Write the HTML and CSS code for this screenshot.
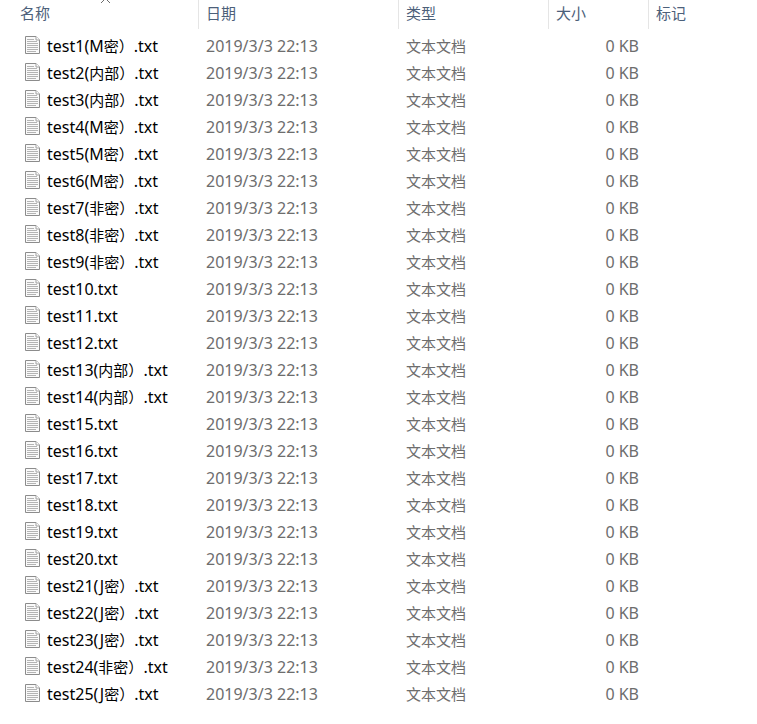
FILE: index.html
```html
<!DOCTYPE html>
<html lang="zh-CN">
<head>
  <meta charset="UTF-8">
  <meta name="viewport" content="width=device-width, initial-scale=1.0">
  <title>文件列表</title>
  <link rel="stylesheet" href="styles.css">
</head>
<body>
  <svg class="symbols" aria-hidden="true">
    <symbol id="fileIcon" viewBox="0 0 15 18">
      <path d="M.5 .5H11L14.5 4V17.5H.5Z" fill="#fafafa" stroke="#8c8c8c"/>
      <path d="M11 .5V4H14.5" fill="#fff" stroke="#a0a0a0"/>
      <path d="M2 3.5H9M2 5.5H12M2 7.5H13M2 9.5H13M2 11.5H13M2 13.5H13M2 15.5H11" stroke="#b4b4b4"/>
    </symbol>
  </svg>

  <table class="file-table">
    <colgroup>
      <col class="col-name">
      <col class="col-date">
      <col class="col-type">
      <col class="col-size">
      <col>
    </colgroup>
    <thead>
      <tr>
        <th class="name" aria-sort="ascending">
          <svg class="sort-arrow" viewBox="0 0 13 4" aria-hidden="true"><path d="M2 3L6.5 -1.5L11 3" fill="none" stroke="#6d6d6d"/></svg>
          <button>名称</button>
        </th>
        <th><button>日期</button></th>
        <th><button>类型</button></th>
        <th><button>大小</button></th>
        <th><button>标记</button></th>
      </tr>
    </thead>
    <tbody id="fileList"></tbody>
  </table>

  <script>
    const files = [
      'test1(M密）.txt',
      'test2(内部）.txt',
      'test3(内部）.txt',
      'test4(M密）.txt',
      'test5(M密）.txt',
      'test6(M密）.txt',
      'test7(非密）.txt',
      'test8(非密）.txt',
      'test9(非密）.txt',
      'test10.txt',
      'test11.txt',
      'test12.txt',
      'test13(内部）.txt',
      'test14(内部）.txt',
      'test15.txt',
      'test16.txt',
      'test17.txt',
      'test18.txt',
      'test19.txt',
      'test20.txt',
      'test21(J密）.txt',
      'test22(J密）.txt',
      'test23(J密）.txt',
      'test24(非密）.txt',
      'test25(J密）.txt'
    ];

    // Chinese characters are set slightly smaller than the Latin text
    function formatName(name) {
      return name.replace(/[^\x00-\x7f]+/g, '<span class="cjk">$&</span>');
    }

    // Render one row per file
    document.getElementById('fileList').innerHTML = files.map(name => `
      <tr>
        <td class="name"><div class="file"><svg class="file-icon"><use href="#fileIcon"/></svg><span>${formatName(name)}</span></div></td>
        <td>2019/3/3 22:13</td>
        <td class="type">文本文档</td>
        <td class="size">0 KB</td>
        <td></td>
      </tr>`).join('');
  </script>
</body>
</html>
```

FILE: styles.css
```css
body {
  margin: 0;
  background-color: #fff;
  font-family: "Noto Sans", "Noto Sans CJK SC", sans-serif;
  font-size: 16px;
  line-height: 27px;
  color: #6d6d6d;
}
.symbols {
  display: none;
}
.file-table {
  width: 100%;
  table-layout: fixed;
  border-collapse: separate;
  border-spacing: 0;
}
.col-name {
  width: 199px;
}
.col-date {
  width: 200px;
}
.col-type {
  width: 150px;
}
.col-size {
  width: 100px;
}
th {
  height: 29px;
  padding: 0 0 0 7px;
  border-right: 1px solid #e5e5e5;
  box-sizing: border-box;
  text-align: left;
  vertical-align: top;
  position: relative;
}
th:last-child {
  border-right: none;
}
th.name {
  padding-left: 20px;
}
th button {
  display: block;
  padding: 0;
  border: none;
  background: none;
  font-family: inherit;
  font-size: 15px;
  line-height: 27px;
  color: #4c607a;
  cursor: pointer;
}
.sort-arrow {
  position: absolute;
  top: 0;
  left: 50%;
  width: 13px;
  height: 4px;
}
tbody::before {
  content: "";
  display: block;
  height: 4px;
}
td {
  height: 27px;
  padding: 0 0 0 7px;
  white-space: nowrap;
}
td.name {
  padding-left: 25px;
  color: #000;
}
.file {
  display: flex;
  align-items: center;
  gap: 7px;
  height: 27px;
}
.file-icon {
  width: 15px;
  height: 18px;
  margin-bottom: 3px;
}
.cjk {
  font-size: 15px;
  line-height: 1;
}
.type {
  font-size: 15px;
}
.size {
  padding-right: 10px;
  text-align: right;
}
tbody tr:hover {
  background-color: #e5f3ff;
}
```
